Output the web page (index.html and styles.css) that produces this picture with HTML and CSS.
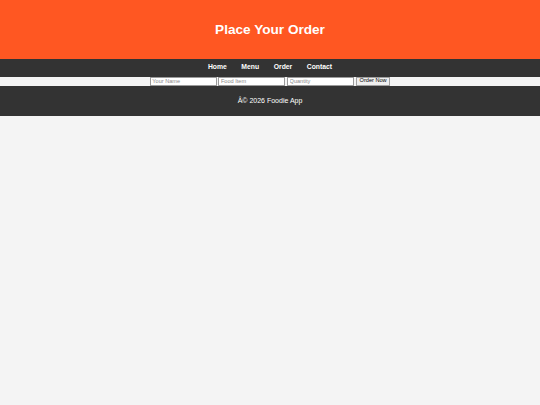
FILE: index.html
```html
<!DOCTYPE html>
<html>
<head>
<meta charset="utf-8">
<title>Place Your Order</title>
<link rel="stylesheet" href="styles.css">
</head>
<body>
<header class="site-header">
  <h1 class="title">Place Your Order</h1>
</header>
<nav class="site-nav">
  <a href="#" class="nav-link">Home</a>
  <a href="#" class="nav-link">Menu</a>
  <a href="#" class="nav-link">Order</a>
  <a href="#" class="nav-link">Contact</a>
</nav>
<form class="order-form">
  <input class="field" type="text" placeholder="Your Name">
  <input class="field" type="text" placeholder="Food Item">
  <input class="field" type="text" placeholder="Quantity">
  <button class="submit" type="button">Order Now</button>
</form>
<footer class="site-footer">
  <p class="copy">Â© 2026 Foodie App</p>
</footer>
</body>
</html>
```
FILE: styles.css
```css
html, body {
  margin: 0;
  padding: 0;
}
body {
  background: #f4f4f4;
  font-family: "Liberation Sans", Arial, sans-serif;
}
.site-header {
  background: #ff5722;
  color: #ffffff;
  height: 59px;
  display: flex;
  align-items: center;
  justify-content: center;
}
.title {
  margin: 0;
  font-size: 13.6px;
  font-weight: bold;
  line-height: 1;
}
.site-nav {
  background: #333333;
  height: 17.5px;
  display: flex;
  align-items: center;
  justify-content: center;
  gap: 14.6px;
}
.nav-link {
  color: #ffffff;
  text-decoration: none;
  font-weight: bold;
  font-size: 6.8px;
  line-height: 1;
}
.order-form {
  margin: 0;
  height: 9.5px;
  display: flex;
  align-items: center;
  justify-content: center;
  gap: 1.6px;
}
.field {
  box-sizing: border-box;
  width: 67px;
  height: 9px;
  margin: 0;
  padding: 0 1.5px;
  border: 1px solid #9a9a9a;
  background: #ffffff;
  font-family: "Liberation Sans", Arial, sans-serif;
  font-size: 5.6px;
  color: #000;
  outline: none;
}
.field::placeholder {
  color: #8a8a8a;
}
.submit {
  box-sizing: border-box;
  width: 34px;
  height: 9px;
  margin: 0 0 0 0.5px;
  padding: 0;
  border: 1px solid #a0a0a0;
  background: #efefef;
  font-family: "Liberation Sans", Arial, sans-serif;
  font-size: 5.6px;
  color: #000;
  line-height: 1;
}
.site-footer {
  background: #333333;
  color: #ffffff;
  height: 29.5px;
  display: flex;
  align-items: center;
  justify-content: center;
}
.copy {
  margin: 0;
  font-size: 7px;
  line-height: 1;
}
```
